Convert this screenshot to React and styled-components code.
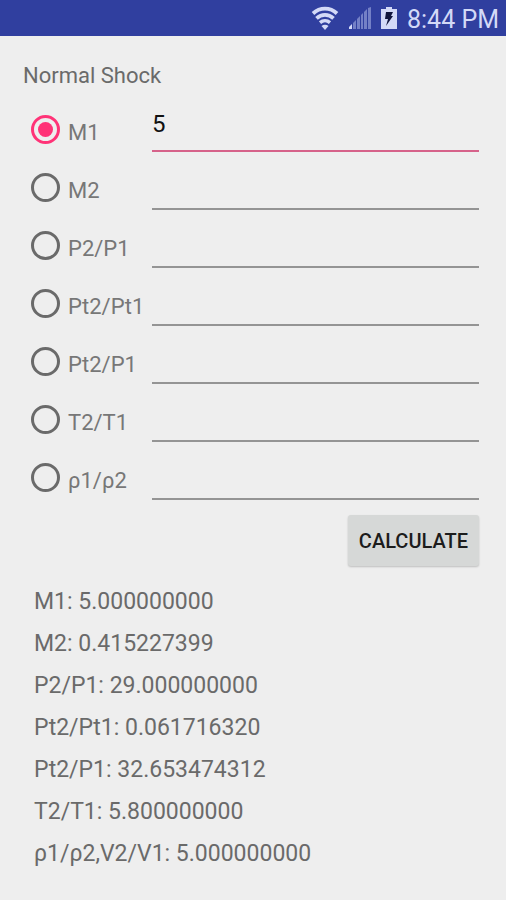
import React, { useState } from 'react';
import styled, { createGlobalStyle } from 'styled-components';

const GlobalStyle = createGlobalStyle`
  * {
    box-sizing: border-box;
  }

  body {
    margin: 0;
    background: #eee;
    font-family: Roboto, "Noto Sans", sans-serif;
  }
`;

const fields = [
  { id: 'm1', label: 'M1', value: '5' },
  { id: 'm2', label: 'M2', value: '' },
  { id: 'p2p1', label: 'P2/P1', value: '' },
  { id: 'pt2pt1', label: 'Pt2/Pt1', value: '' },
  { id: 'pt2p1', label: 'Pt2/P1', value: '' },
  { id: 't2t1', label: 'T2/T1', value: '' },
  { id: 'rho', label: 'ρ1/ρ2', value: '' },
];

const results = [
  'M1: 5.000000000',
  'M2: 0.415227399',
  'P2/P1: 29.000000000',
  'Pt2/Pt1: 0.061716320',
  'Pt2/P1: 32.653474312',
  'T2/T1: 5.800000000',
  'ρ1/ρ2,V2/V1: 5.000000000',
];

const WifiIcon = () => (
  <svg width={28} height={24} viewBox="0 0 28 24" fill="none" stroke="#d3d9f7" strokeWidth="3.8">
    <path d="M2 7.5C9 1 19 1 26 7.5" />
    <path d="M5.5 12.3C10.5 7.8 17.5 7.8 22.5 12.3" />
    <path d="M9 16.6C12 14 16 14 19 16.6" strokeWidth="3.4" />
    <path d="M10.5 20C12.5 18.4 15.5 18.4 17.5 20L14 24z" fill="#d3d9f7" stroke="none" />
  </svg>
);

const SignalIcon = () => (
  <svg width={22} height={22} viewBox="0 0 22 22" fill="#7480c6">
    <path d="M0 22v-2l3-3v5z" fill="#d3d9f7" />
    <path d="M4 22v-6l3-3v9z" />
    <path d="M8 22V12l3-3v13z" />
    <path d="M12 22V8l2-2v16z" />
    <path d="M15 22V5l3-3v20z" />
    <path d="M19 22V1l3-1v22z" />
  </svg>
);

const BatteryIcon = () => (
  <svg width={16} height={22} viewBox="0 0 16 22">
    <path d="M5 0h6v2h5v20H0V2h5z" fill="#d3d9f7" />
    <path d="M5 5h7l-2 4h2L5 19l2-7H4z" fill="#10143c" />
  </svg>
);

const App = () => {
  const [selected, setSelected] = useState('m1');

  return (
    <>
      <GlobalStyle />
      <StatusBar>
        <WifiIcon />
        <SignalIcon />
        <BatteryIcon />
        <Clock>8:44 PM</Clock>
      </StatusBar>
      <Content>
        <Title>Normal Shock</Title>
        <Form onSubmit={(e) => e.preventDefault()}>
          {fields.map(({ id, label, value }) => (
            <Row key={id}>
              <Option>
                <Radio
                  type="radio"
                  name="known"
                  checked={selected === id}
                  onChange={() => setSelected(id)}
                />
                <OptionText>{label}</OptionText>
              </Option>
              <Field
                type="text"
                inputMode="decimal"
                aria-label={label}
                defaultValue={value}
                $active={selected === id}
                onFocus={() => setSelected(id)}
              />
            </Row>
          ))}
          <Button type="submit">CALCULATE</Button>
        </Form>
        <Results>
          {results.map((line) => (
            <Result key={line}>{line}</Result>
          ))}
        </Results>
      </Content>
    </>
  );
};

const StatusBar = styled.header`
  display: flex;
  align-items: center;
  justify-content: flex-end;
  gap: 10px;
  height: 36px;
  padding: 0 7px;
  background: #303f9f;
`;

const Clock = styled.time`
  padding-top: 4px;
  font-size: 25px;
  line-height: 32px;
  color: #d3d9f7;
`;

const Content = styled.main`
  padding: 24px 27px 24px 23px;
`;

const Title = styled.h1`
  margin: 0;
  padding-top: 2px;
  font-size: 22px;
  font-weight: 400;
  line-height: 28px;
  color: #6a6a6a;
`;

const Form = styled.form`
  display: flex;
  flex-direction: column;
  padding: 4px 0 0 8px;
`;

const Row = styled.div`
  display: flex;
  height: 58px;
`;

const Option = styled.label`
  display: flex;
  align-items: center;
  flex: 0 0 121px;
  gap: 8px;
  padding-top: 12px;
  cursor: pointer;
`;

const Radio = styled.input`
  appearance: none;
  flex: none;
  display: grid;
  place-items: center;
  width: 29px;
  height: 29px;
  margin: 0;
  border: 3px solid #6a6a6a;
  border-radius: 50%;
  cursor: pointer;

  &:checked {
    border-color: #ff3377;
  }

  &:checked::before {
    content: '';
    width: 15px;
    height: 15px;
    border-radius: 50%;
    background: #ff3377;
  }
`;

const OptionText = styled.span`
  padding-top: 8px;
  font-size: 22px;
  line-height: 28px;
  color: #777;
`;

const Field = styled.input`
  flex: 1;
  min-width: 0;
  padding: 4px 0 0;
  border: 0;
  border-bottom: 2px solid ${({ $active }) => ($active ? '#d6628a' : '#949494')};
  background: none;
  outline: none;
  font-family: inherit;
  font-size: 24px;
  color: #111;
`;

const Button = styled.button`
  align-self: flex-end;
  height: 51px;
  margin-top: 15px;
  padding: 0 11px;
  border: 0;
  border-radius: 3px;
  background: #d6d8d7;
  box-shadow: 0 1px 2px rgba(0, 0, 0, 0.2);
  font-family: inherit;
  font-size: 20px;
  font-weight: 500;
  color: #1c1c1c;
  cursor: pointer;
`;

const Results = styled.ul`
  margin: 0;
  padding: 15px 0 0 11px;
  list-style: none;
`;

const Result = styled.li`
  font-size: 23px;
  line-height: 42px;
  color: #6a6a6a;
`;

export default App;
